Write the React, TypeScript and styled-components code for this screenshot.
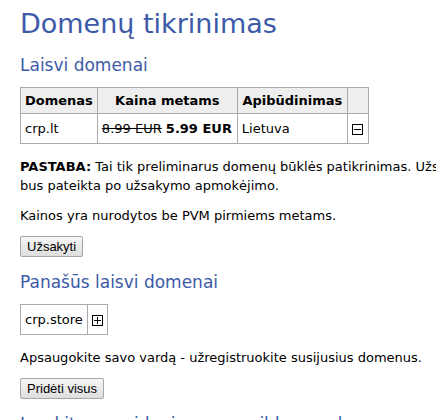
import React from "react";
import styled, { createGlobalStyle } from "styled-components";

const Global = createGlobalStyle`
  html, body { margin: 0; padding: 0; overflow: hidden; background: #fff; }
  body { font-family: "DejaVu Sans", Verdana, sans-serif; font-size: 13px; color: #000; }
`;

const Page = styled.div`
  width: 620px;
  padding: 8px 20px 0 20px;
`;

const Title = styled.h1`
  margin: 0;
  font-size: 27px;
  font-weight: normal;
  color: #3c5aa8;
  line-height: 32px;
`;

const Subtitle = styled.h2`
  margin: 14px 0 11px 0;
  font-size: 17px;
  font-weight: normal;
  color: #3c5aa8;
  line-height: 22px;
`;

const Table = styled.table`
  border-collapse: collapse;
  border: 1px solid #aaa;
`;

const Th = styled.th<{ $w?: number }>`
  background: #eee;
  border: 1px solid #aaa;
  padding: 4px 4px;
  font-weight: bold;
  height: 17px;
  text-align: center;
  width: ${(p) => (p.$w ? `${p.$w}px` : "auto")};
`;

const Td = styled.td<{ $icon?: boolean }>`
  border: 1px solid #aaa;
  padding: ${(p) => (p.$icon ? "3px 4px" : "5px 4px")};
  height: 19px;
  text-align: ${(p) => (p.$icon ? "center" : "left")};
`;

const Old = styled.span`
  text-decoration: line-through;
`;

const ToggleBox = styled.span`
  display: inline-block;
  width: 9px;
  height: 9px;
  border: 1px solid #000;
  position: relative;
  vertical-align: middle;
  &::before {
    content: "";
    position: absolute;
    left: 1px;
    right: 1px;
    top: 4px;
    height: 1px;
    background: #000;
  }
`;

const PlusBox = styled(ToggleBox)`
  &::after {
    content: "";
    position: absolute;
    top: 1px;
    bottom: 1px;
    left: 4px;
    width: 1px;
    background: #000;
  }
`;

const Para = styled.p<{ $afterTable?: boolean }>`
  margin: ${(p) => (p.$afterTable ? "13px" : "11px")} 0 0 0;
  line-height: 19px;
`;

const Button = styled.button`
  margin-top: 11px;
  font-family: "Liberation Sans", Arial, sans-serif;
  font-size: 13px;
  color: #000;
  padding: 1px 6px;
  height: 21px;
  border: 1px solid #a6a6a6;
  border-radius: 2px;
  background: linear-gradient(#f6f6f6, #dedede);
`;

export default function App() {
  return (
    <Page>
      <Global />
      <Title>Domenų tikrinimas</Title>
      <Subtitle>Laisvi domenai</Subtitle>
      <Table>
        <thead>
          <tr>
            <Th>Domenas</Th>
            <Th $w={131}>Kaina metams</Th>
            <Th $w={101}>Apibūdinimas</Th>
            <Th $w={12}></Th>
          </tr>
        </thead>
        <tbody>
          <tr>
            <Td>crp.lt</Td>
            <Td>
              <Old>8.99 EUR</Old> <b>5.99 EUR</b>
            </Td>
            <Td>Lietuva</Td>
            <Td $icon>
              <ToggleBox />
            </Td>
          </tr>
        </tbody>
      </Table>
      <Para $afterTable>
        <b>PASTABA:</b> Tai tik preliminarus domenų būklės patikrinimas. Užsakymo būsena
        <br />
        bus pateikta po užsakymo apmokėjimo.
      </Para>
      <Para>Kainos yra nurodytos be PVM pirmiems metams.</Para>
      <Button>Užsakyti</Button>
      <Subtitle>Panašūs laisvi domenai</Subtitle>
      <Table>
        <tbody>
          <tr>
            <Td>crp.store</Td>
            <Td $icon>
              <PlusBox />
            </Td>
          </tr>
        </tbody>
      </Table>
      <Para $afterTable>Apsaugokite savo vardą - užregistruokite susijusius domenus.</Para>
      <Button>Pridėti visus</Button>
      <Subtitle>Įveskite pageidaujamus papildomus domenus</Subtitle>
    </Page>
  );
}
